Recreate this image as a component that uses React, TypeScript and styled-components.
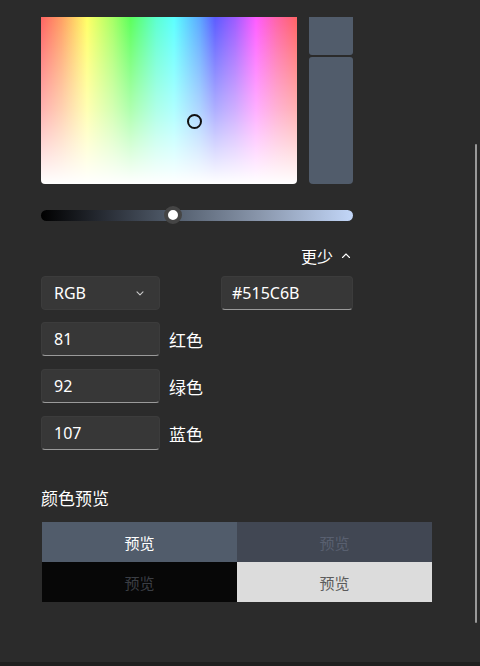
import styled, { createGlobalStyle } from 'styled-components'

const GlobalStyle = createGlobalStyle`
    html, body {
        margin: 0;
        padding: 0;
        background: #2b2b2b;
    }
    body {
        font-family: "Noto Sans", "Noto Sans CJK SC", sans-serif;
        color: #ffffff;
    }
`

const fields = [
    { value: '81', label: '红色' },
    { value: '92', label: '绿色' },
    { value: '107', label: '蓝色' },
]

const previews = [
    { bg: '#515c6b', fg: '#ffffff' },
    { bg: '#414753', fg: '#596070' },
    { bg: '#070707', fg: '#3b3e44' },
    { bg: '#dcdcdc', fg: '#5b5b5b' },
]

const Chevron = ({ up }: { up?: boolean }) => (
    <svg width="10" height="10" viewBox="0 0 10 10">
        <path
            d={up ? 'M1.5 6.5 L5 3 L8.5 6.5' : 'M2 3.8 L5 6.8 L8 3.8'}
            fill="none"
            stroke={up ? '#ffffff' : '#c8c8c8'}
            strokeWidth="1.1"
            strokeLinecap="round"
            strokeLinejoin="round"
        />
    </svg>
)

const App = () => {
    return (
        <Page>
            <GlobalStyle />
            <Content>
                <TopRow>
                    <Spectrum>
                        <Marker style={{ left: 146, top: 97 }} />
                    </Spectrum>
                    <SwatchColumn>
                        <Swatch $h={38} />
                        <Swatch $h={127} />
                    </SwatchColumn>
                </TopRow>

                <SliderTrack>
                    <SliderThumb style={{ left: 132 - 9 }} />
                </SliderTrack>

                <MoreRow>
                    <MoreButton>
                        更少
                        <Chevron up />
                    </MoreButton>
                </MoreRow>

                <FieldRow>
                    <Select>
                        RGB
                        <Chevron />
                    </Select>
                    <HexInput>#515C6B</HexInput>
                </FieldRow>

                {fields.map((f) => (
                    <ChannelRow key={f.label}>
                        <NumberInput>{f.value}</NumberInput>
                        <ChannelLabel>{f.label}</ChannelLabel>
                    </ChannelRow>
                ))}

                <SectionTitle>颜色预览</SectionTitle>
                <PreviewGrid>
                    {previews.map((p, i) => (
                        <PreviewCell key={i} $bg={p.bg} $fg={p.fg}>
                            预览
                        </PreviewCell>
                    ))}
                </PreviewGrid>
            </Content>
            <BottomEdge />
            <ScrollThumb />
        </Page>
    )
}

export default App

const Page = styled.div`
    position: relative;
    width: 480px;
    height: 666px;
    display: flex;
    flex-direction: column;
    overflow: hidden;
    background: #2b2b2b;
`

const Content = styled.div`
    flex: 1;
    padding: 17px 0 0 41px;
    display: flex;
    flex-direction: column;
`

const TopRow = styled.div`
    display: flex;
    gap: 12px;
    height: 167px;
`

const Spectrum = styled.div`
    position: relative;
    width: 256px;
    height: 167px;
    border-radius: 0 0 4px 4px;
    background:
        linear-gradient(to bottom, rgba(255, 255, 255, 0) 0%, rgba(255, 255, 255, 0.5) 55%, #ffffff 100%),
        linear-gradient(
            to right,
            #ff6464 0%,
            #ffa064 8%,
            #ffff66 18%,
            #a8ff66 28%,
            #5cff5c 35%,
            #5cffd0 45%,
            #5cffff 52%,
            #5ca8ff 62%,
            #5c5cff 68%,
            #a05cff 76%,
            #ff5cff 84%,
            #ff64a8 92%,
            #ff6464 100%
        );
`

const Marker = styled.div`
    position: absolute;
    width: 15px;
    height: 15px;
    border: 2px solid #111111;
    border-radius: 50%;
    box-sizing: border-box;
`

const SwatchColumn = styled.div`
    display: flex;
    flex-direction: column;
    gap: 2px;
    width: 44px;
`

const Swatch = styled.div<{ $h: number }>`
    height: ${(p) => p.$h}px;
    background: #515c6b;
    &:first-child {
        border-radius: 0 0 3px 3px;
    }
    &:last-child {
        border-radius: 3px 3px 4px 4px;
    }
`

const SliderTrack = styled.div`
    position: relative;
    margin-top: 26px;
    width: 312px;
    height: 11px;
    border-radius: 6px;
    background: linear-gradient(to right, #000000 0%, #2b3039 22%, #515c6b 42%, #8996ab 70%, #c2d6f8 100%);
`

const SliderThumb = styled.div`
    position: absolute;
    top: -4px;
    width: 18px;
    height: 18px;
    box-sizing: border-box;
    border-radius: 50%;
    background: #ffffff;
    border: 4px solid #454545;
`

const MoreRow = styled.div`
    display: flex;
    justify-content: flex-end;
    width: 312px;
    margin-top: 25px;
    height: 20px;
`

const MoreButton = styled.div`
    display: flex;
    align-items: center;
    gap: 8px;
    font-size: 16px;
    color: #ffffff;
    padding-right: 2px;
`

const FieldRow = styled.div`
    display: flex;
    justify-content: space-between;
    width: 312px;
    margin-top: 10px;
`

const inputBase = `
    box-sizing: border-box;
    height: 34px;
    display: flex;
    align-items: center;
    padding: 0 12px;
    border-radius: 4px;
    background: #373737;
    border: 1px solid #3c3c3c;
    font-size: 16px;
    color: #ffffff;
`

const Select = styled.div`
    ${inputBase}
    width: 119px;
    justify-content: space-between;
    padding-right: 14px;
`

const HexInput = styled.div`
    ${inputBase}
    width: 132px;
    padding-left: 10px;
    border-bottom: 1px solid #9a9a9a;
`

const ChannelRow = styled.div`
    display: flex;
    align-items: center;
    gap: 9px;
    margin-top: 12px;
    & + & {
        margin-top: 13px;
    }
`

const NumberInput = styled.div`
    ${inputBase}
    width: 119px;
    border-bottom: 1px solid #9a9a9a;
`

const ChannelLabel = styled.span`
    font-size: 17px;
    color: #ffffff;
`

const SectionTitle = styled.div`
    margin-top: 38px;
    font-size: 17px;
    line-height: 21px;
    color: #ffffff;
`

const PreviewGrid = styled.div`
    display: grid;
    grid-template-columns: 195px 195px;
    grid-auto-rows: 40px;
    margin: 13px 0 0 1px;
`

const PreviewCell = styled.div<{ $bg: string; $fg: string }>`
    display: flex;
    align-items: center;
    justify-content: center;
    background: ${(p) => p.$bg};
    color: ${(p) => p.$fg};
    font-size: 15px;
`

const BottomEdge = styled.div`
    height: 4px;
    background: #1f1f1f;
`

const ScrollThumb = styled.div`
    position: absolute;
    right: 3px;
    top: 144px;
    width: 2px;
    height: 479px;
    border-radius: 1px;
    background: #999999;
`
